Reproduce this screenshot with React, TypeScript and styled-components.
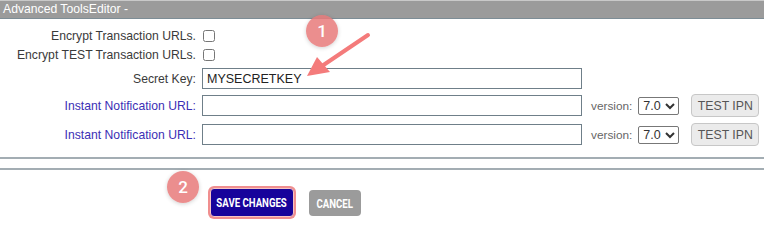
import styled, { createGlobalStyle } from "styled-components";

const GlobalStyle = createGlobalStyle`
  html, body {
    margin: 0;
    padding: 0;
    background: #fff;
  }
  body {
    font-family: "Liberation Sans", Arial, sans-serif;
    font-size: 12px;
    color: #333;
  }
`;

const Page = styled.div`
  position: relative;
  width: 764px;
  height: 232px;
  overflow: hidden;
`;

const Header = styled.div`
  height: 17px;
  line-height: 17px;
  background: #9b9b9b;
  border-top: 1px solid #c9c9c9;
  border-bottom: 1px solid #7d8d96;
  color: #fff;
  padding-left: 3px;
  font-size: 12.2px;
`;

const Form = styled.div`
  display: flex;
  flex-direction: column;
  padding: 7px 0 11px;
  border-bottom: 2px solid #a3adb3;
`;

const Row = styled.div<{ $h: number; $mt?: number }>`
  display: flex;
  align-items: center;
  height: ${({ $h }) => $h}px;
  margin-top: ${({ $mt }) => $mt ?? 0}px;
`;

const Label = styled.label<{ $blue?: boolean }>`
  width: 196px;
  text-align: right;
  padding-right: 6px;
  font-size: 12.2px;
  color: ${({ $blue }) => ($blue ? "#3b2fb5" : "#3a3a3a")};
  white-space: nowrap;
`;

const Check = styled.input`
  margin: 0 0 0 1px;
  width: 12px;
  height: 12px;
`;

const TextInput = styled.input`
  width: 380px;
  height: 21px;
  box-sizing: border-box;
  border: 1px solid #6f7f89;
  padding: 0 4px;
  font-family: "Liberation Sans", Arial, sans-serif;
  font-size: 12.5px;
  color: #222;
  outline: none;
`;

const Version = styled.span`
  margin-left: 9px;
  color: #666;
  font-size: 11.8px;
`;

const Select = styled.select`
  margin-left: 6px;
  width: 41px;
  min-width: 41px;
  max-width: 41px;
  height: 18px;
  box-sizing: border-box;
  font-family: "Liberation Sans", Arial, sans-serif;
  font-size: 12.5px;
  color: #333;
  border: 1px solid #777;
  border-radius: 2px;
  padding: 0;
  background: #fff;
`;

const TestButton = styled.button`
  margin-left: 12px;
  width: 68px;
  height: 23px;
  box-sizing: border-box;
  border: 1px solid #c7c7c7;
  border-radius: 4px;
  background: #ebebeb;
  color: #555;
  font-family: "Liberation Sans", Arial, sans-serif;
  font-size: 12.3px;
  padding: 0;
`;

const Footer = styled.div`
  margin-top: 9px;
  border-top: 2px solid #a3adb3;
  display: flex;
  align-items: center;
  height: 64px;
  padding-left: 210px;
  gap: 15px;
`;

const ActionButton = styled.button<{ $primary?: boolean }>`
  display: flex;
  align-items: center;
  justify-content: center;
  height: ${({ $primary }) => ($primary ? 29 : 26)}px;
  width: ${({ $primary }) => ($primary ? 84 : 52)}px;
  margin-top: ${({ $primary }) => ($primary ? 0 : 2)}px;
  padding: 0;
  border-radius: 4px;
  border: ${({ $primary }) => ($primary ? "1px solid #f6c4c4" : "none")};
  box-shadow: ${({ $primary }) => ($primary ? "0 0 0 2px #f08f8f" : "none")};
  background: ${({ $primary }) => ($primary ? "#17039b" : "#9b9b9b")};
  color: #fff;
`;

const ButtonText = styled.span`
  display: inline-block;
  font-family: "Roboto", sans-serif;
  font-weight: bold;
  font-size: 13px;
  white-space: nowrap;
  transform: scaleX(0.74);
`;

const Badge = styled.div<{ $x: number; $y: number }>`
  position: absolute;
  left: ${({ $x }) => $x - 16}px;
  top: ${({ $y }) => $y - 16}px;
  width: 32px;
  height: 32px;
  border-radius: 50%;
  background: rgba(232, 122, 122, 0.85);
  box-shadow: 0 1px 4px rgba(0, 0, 0, 0.18);
  color: #fff;
  font-family: "Roboto", sans-serif;
  font-size: 17px;
  font-weight: 500;
  display: flex;
  align-items: center;
  justify-content: center;
`;

const Arrow = styled.svg`
  position: absolute;
  left: 300px;
  top: 30px;
`;

function IpnRow({ mt }: { mt: number }) {
  return (
    <Row $h={23} $mt={mt}>
      <Label $blue>Instant Notification URL:</Label>
      <TextInput type="text" />
      <Version>version:</Version>
      <Select defaultValue="7.0">
        <option value="7.0">7.0</option>
      </Select>
      <TestButton>TEST IPN</TestButton>
    </Row>
  );
}

export default function App() {
  return (
    <Page>
      <GlobalStyle />
      <Header>Advanced ToolsEditor -</Header>
      <Form>
        <Row $h={19}>
          <Label>Encrypt Transaction URLs.</Label>
          <Check type="checkbox" />
        </Row>
        <Row $h={19}>
          <Label>Encrypt TEST Transaction URLs.</Label>
          <Check type="checkbox" />
        </Row>
        <Row $h={21} $mt={4}>
          <Label>Secret Key:</Label>
          <TextInput type="text" defaultValue="MYSECRETKEY" />
        </Row>
        <IpnRow mt={5} />
        <IpnRow mt={6} />
      </Form>
      <Footer>
        <ActionButton $primary>
          <ButtonText>SAVE CHANGES</ButtonText>
        </ActionButton>
        <ActionButton>
          <ButtonText>CANCEL</ButtonText>
        </ActionButton>
      </Footer>
      <Badge $x={322} $y={31}>1</Badge>
      <Badge $x={183} $y={187}>2</Badge>
      <Arrow width="80" height="60" viewBox="0 0 80 60">
        <path d="M68 5 L22 36" stroke="#f47b7b" strokeWidth="4" strokeLinecap="round" />
        <polygon points="7,46 17,27 30,42" fill="#f47b7b" />
      </Arrow>
    </Page>
  );
}
